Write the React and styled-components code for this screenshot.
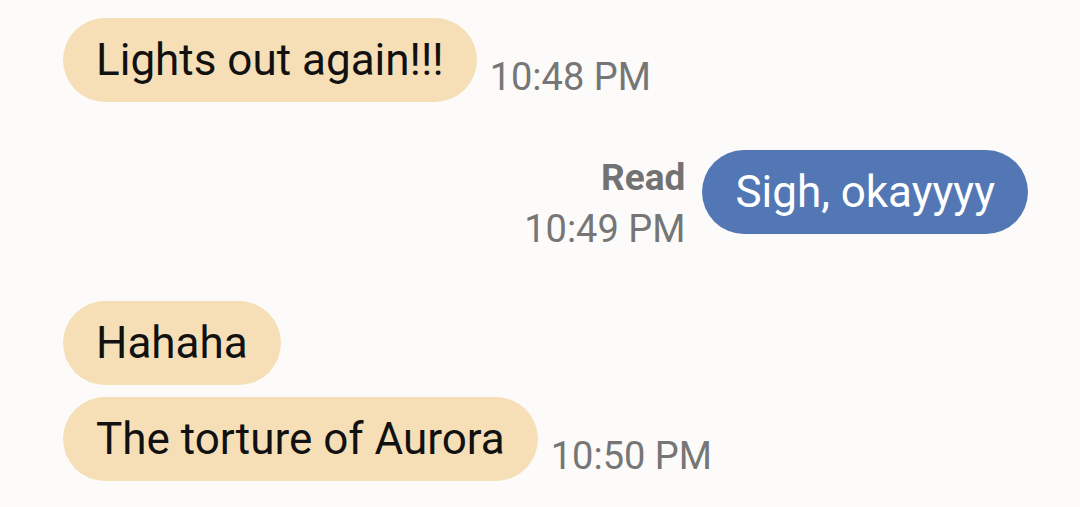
import React from 'react'
import styled, { createGlobalStyle } from 'styled-components'

const GlobalStyle = createGlobalStyle`
  html, body {
    margin: 0;
    padding: 0;
    background: #fcfbf9;
  }
  body {
    font-family: Roboto, 'Liberation Sans', sans-serif;
  }
`

const Thread = styled.div`
  width: 1080px;
  height: 507px;
  box-sizing: border-box;
  padding: 18px 52px 0 63px;
  display: flex;
  flex-direction: column;
  overflow: hidden;
`

const Group = styled.div`
  display: flex;
  flex-direction: column;
  gap: 12px;
  margin-top: ${props => props.top || 0}px;
`

const Row = styled.div`
  display: flex;
  align-items: ${props => props.mine ? 'flex-start' : 'flex-end'};
  justify-content: ${props => props.mine ? 'flex-end' : 'flex-start'};
  gap: ${props => props.mine ? '17px' : '13px'};
`

const Bubble = styled.div`
  height: 84px;
  line-height: 84px;
  padding: 0 33px 0 33px;
  border-radius: 42px;
  font-size: 44px;
  white-space: nowrap;
  background: ${props => props.mine ? '#5277b4' : '#f6dfb7'};
  color: ${props => props.mine ? '#ffffff' : '#111111'};
`

const Meta = styled.div`
  display: flex;
  flex-direction: column;
  align-items: flex-end;
  padding-top: 8px;
`

const ReadMark = styled.div`
  font-size: 37px;
  font-weight: 700;
  line-height: 40px;
  color: #727272;
`

const Time = styled.div`
  font-size: 38px;
  line-height: 38px;
  color: #767676;
  white-space: nowrap;
  padding-bottom: ${props => props.inline ? '6px' : '0'};
  margin-top: ${props => props.inline ? '0' : '12px'};
`

const App = () => {
  return (
    <>
      <GlobalStyle />
      <Thread>
        <Group>
          <Row>
            <Bubble>Lights out again!!!</Bubble>
            <Time inline>10:48 PM</Time>
          </Row>
        </Group>

        <Group top={48}>
          <Row mine>
            <Meta>
              <ReadMark>Read</ReadMark>
              <Time>10:49 PM</Time>
            </Meta>
            <Bubble mine>Sigh, okayyyy</Bubble>
          </Row>
        </Group>

        <Group top={53}>
          <Row>
            <Bubble>Hahaha</Bubble>
          </Row>
          <Row>
            <Bubble>The torture of Aurora</Bubble>
            <Time inline>10:50 PM</Time>
          </Row>
        </Group>
      </Thread>
    </>
  )
}

export default App
